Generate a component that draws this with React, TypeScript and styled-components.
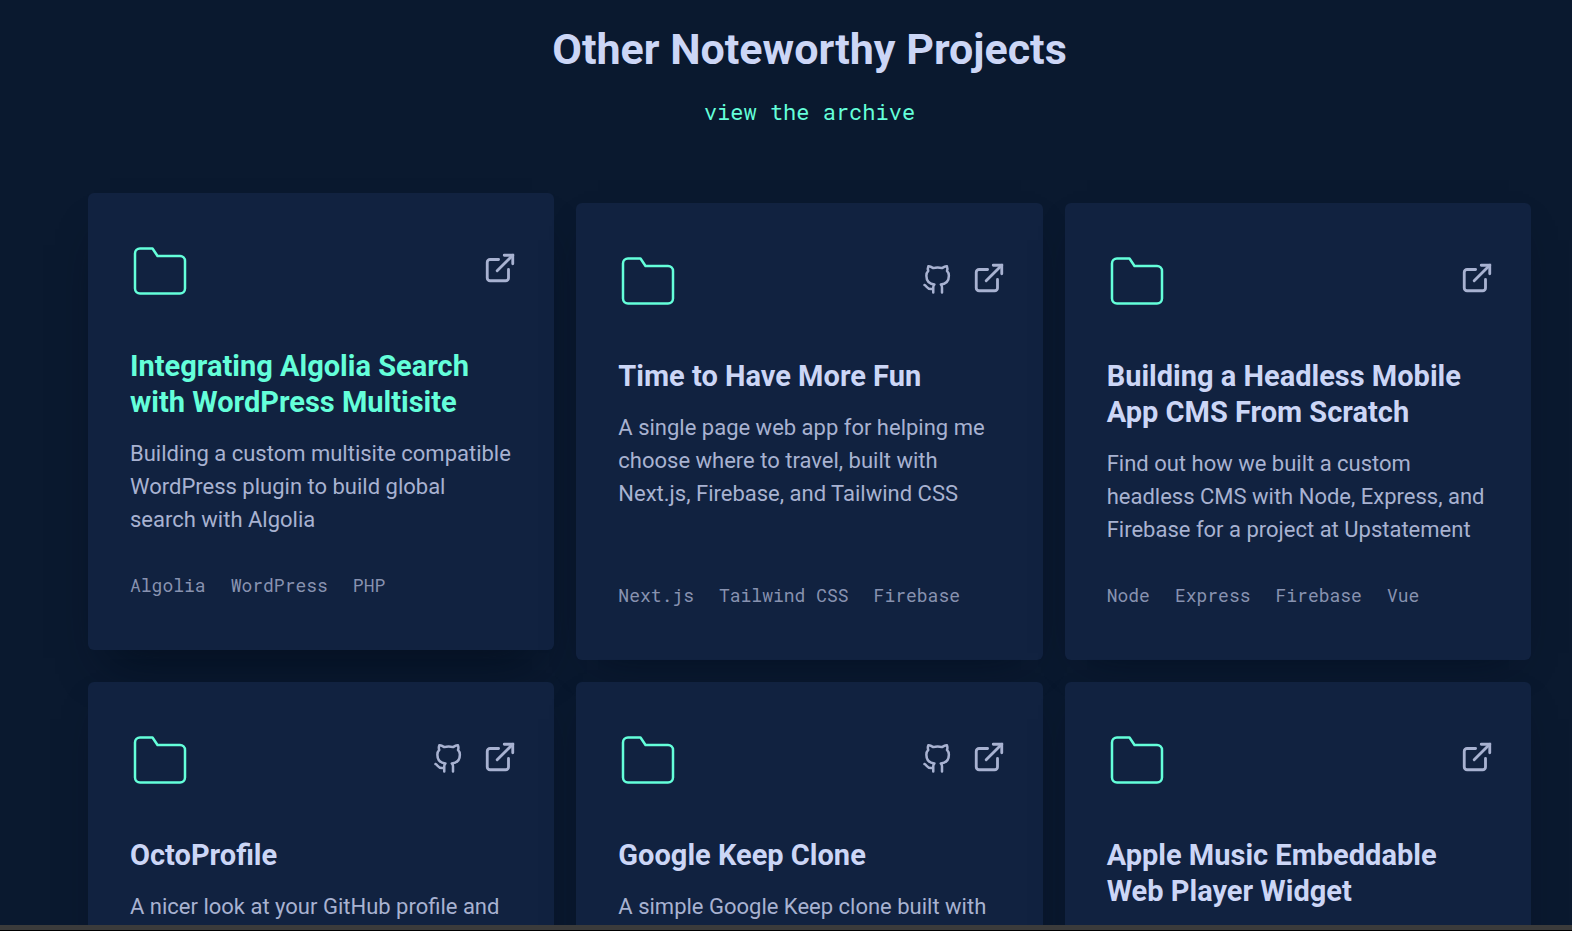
import React from 'react';
import styled, { createGlobalStyle, css } from 'styled-components';

const GlobalStyle = createGlobalStyle`
  *, *::before, *::after { box-sizing: border-box; }
  body {
    margin: 0;
    background: #0a192f;
    color: #a8b2d1;
    font-family: Roboto, "Liberation Sans", sans-serif;
  }
`;

const mono = css`
  font-family: "Roboto Mono", "Liberation Mono", monospace;
`;

const Frame = styled.div`
  display: flex;
  flex-direction: column;
  height: 100vh;
`;

const Section = styled.main`
  flex: 1;
  min-height: 0;
  overflow: hidden;
  display: flex;
  flex-direction: column;
  align-items: center;
  padding: 24px 41px 0 88px;
`;

const BottomEdge = styled.footer`
  flex: none;
  height: 6px;
  background: #3b3b3b;
  border-bottom: 1px solid #000;
`;

const Heading = styled.h2`
  margin: 0;
  color: #ccd6f6;
  font-size: 43px;
  font-weight: 700;
  line-height: 50px;
  text-align: center;
`;

const ArchiveLink = styled.a`
  ${mono}
  margin-top: 22px;
  color: #64ffda;
  font-size: 22px;
  line-height: 32px;
  text-decoration: none;
`;

const Grid = styled.ul`
  list-style: none;
  width: 100%;
  margin: 75px 0 0;
  padding: 0;
  display: grid;
  grid-template-columns: repeat(3, minmax(0, 1fr));
  grid-auto-rows: 1fr;
  gap: 22px;

  @media (max-width: 1200px) {
    grid-template-columns: repeat(auto-fill, minmax(320px, 1fr));
  }
`;

const Card = styled.li<{ $raised?: boolean }>`
  position: relative;
  display: flex;
  flex-direction: column;
  padding: 48px 42px;
  border-radius: 6px;
  background: #112240;
  box-shadow: ${(p) =>
    p.$raised
      ? '0 30px 45px -22px rgba(2, 12, 27, 0.8)'
      : '0 15px 40px -22px rgba(2, 12, 27, 0.7)'};
  transform: ${(p) => (p.$raised ? 'translateY(-10px)' : 'none')};
`;

const CardTop = styled.div`
  display: flex;
  justify-content: space-between;
  align-items: flex-start;
  margin-bottom: 47px;
`;

const FolderSvg = styled.svg`
  width: 60px;
  height: 60px;
  color: #64ffda;
`;

const Actions = styled.div`
  display: flex;
  align-items: flex-end;
  gap: 20px;
  margin: 10px -5px 0 0;
`;

const IconLink = styled.a<{ $size: number }>`
  display: flex;
  color: #a8b2d1;

  svg {
    width: ${(p) => p.$size}px;
    height: ${(p) => p.$size}px;
    overflow: visible;
  }
`;

const Title = styled.h3<{ $active?: boolean }>`
  margin: 0 0 17px;
  color: ${(p) => (p.$active ? '#64ffda' : '#ccd6f6')};
  font-size: 29px;
  font-weight: 700;
  line-height: 36px;
`;

const TitleLink = styled.a`
  color: inherit;
  text-decoration: none;
`;

const Description = styled.p`
  margin: 0;
  font-size: 22px;
  line-height: 33px;
`;

const Tags = styled.ul`
  ${mono}
  list-style: none;
  display: flex;
  flex-wrap: wrap;
  column-gap: 25px;
  margin: auto 0 0;
  padding: 33px 0 1px;
  color: #8892b0;
  font-size: 18px;
  line-height: 32px;
`;

const stroke = {
  viewBox: '0 0 24 24',
  fill: 'none',
  stroke: 'currentColor',
  strokeLinecap: 'round' as const,
  'aria-hidden': true,
};

const Folder = () => (
  <FolderSvg {...stroke} strokeWidth="1" strokeLinejoin="round">
    <path d="M22 19a2 2 0 0 1-2 2H4a2 2 0 0 1-2-2V5a2 2 0 0 1 2-2h5l2 3h9a2 2 0 0 1 2 2z" />
  </FolderSvg>
);

const GitHub = () => (
  <svg {...stroke} strokeWidth="2" strokeLinejoin="round">
    <path d="M9 19c-5 1.5-5-2.5-7-3m14 6v-3.87a3.37 3.37 0 0 0-.94-2.61c3.14-.35 6.44-1.54 6.44-7A5.44 5.44 0 0 0 20 4.77 5.07 5.07 0 0 0 19.91 1S18.73.65 16 2.48a13.38 13.38 0 0 0-7 0C6.27.65 5.09 1 5.09 1A5.07 5.07 0 0 0 5 4.77a5.44 5.44 0 0 0-1.5 3.78c0 5.42 3.3 6.61 6.44 7A3.37 3.37 0 0 0 9 18.13V22" />
  </svg>
);

const External = () => (
  <svg {...stroke} strokeWidth="2" strokeLinejoin="miter">
    <path d="M18 13v6a2 2 0 0 1-2 2H5a2 2 0 0 1-2-2V8a2 2 0 0 1 2-2h6" />
    <path d="M15 3h6v6" />
    <path d="M10 14 21 3" />
  </svg>
);

interface Project {
  title: string;
  description?: string;
  tags?: string[];
  github?: boolean;
  active?: boolean;
}

const projects: Project[] = [
  {
    title: 'Integrating Algolia Search with WordPress Multisite',
    description:
      'Building a custom multisite compatible WordPress plugin to build global search with Algolia',
    tags: ['Algolia', 'WordPress', 'PHP'],
    active: true,
  },
  {
    title: 'Time to Have More Fun',
    description:
      'A single page web app for helping me choose where to travel, built with Next.js, Firebase, and Tailwind CSS',
    tags: ['Next.js', 'Tailwind CSS', 'Firebase'],
    github: true,
  },
  {
    title: 'Building a Headless Mobile App CMS From Scratch',
    description:
      'Find out how we built a custom headless CMS with Node, Express, and Firebase for a project at Upstatement',
    tags: ['Node', 'Express', 'Firebase', 'Vue'],
  },
  {
    title: 'OctoProfile',
    description: 'A nicer look at your GitHub profile and',
    github: true,
  },
  {
    title: 'Google Keep Clone',
    description: 'A simple Google Keep clone built with',
    github: true,
  },
  { title: 'Apple Music Embeddable Web Player Widget' },
];

const ProjectCard = ({ title, description, tags, github, active }: Project) => (
  <Card $raised={active}>
    <CardTop>
      <Folder />
      <Actions>
        {github && (
          <IconLink href="#" $size={30} aria-label="GitHub">
            <GitHub />
          </IconLink>
        )}
        <IconLink href="#" $size={34} aria-label="External link">
          <External />
        </IconLink>
      </Actions>
    </CardTop>
    <Title $active={active}>
      <TitleLink href="#">{title}</TitleLink>
    </Title>
    {description && <Description>{description}</Description>}
    {tags && (
      <Tags>
        {tags.map((tag) => (
          <li key={tag}>{tag}</li>
        ))}
      </Tags>
    )}
  </Card>
);

export default function App() {
  return (
    <>
      <GlobalStyle />
      <Frame>
        <Section>
          <Heading>Other Noteworthy Projects</Heading>
          <ArchiveLink href="#">view the archive</ArchiveLink>
          <Grid>
            {projects.map((project) => (
              <ProjectCard key={project.title} {...project} />
            ))}
          </Grid>
        </Section>
        <BottomEdge />
      </Frame>
    </>
  );
}
